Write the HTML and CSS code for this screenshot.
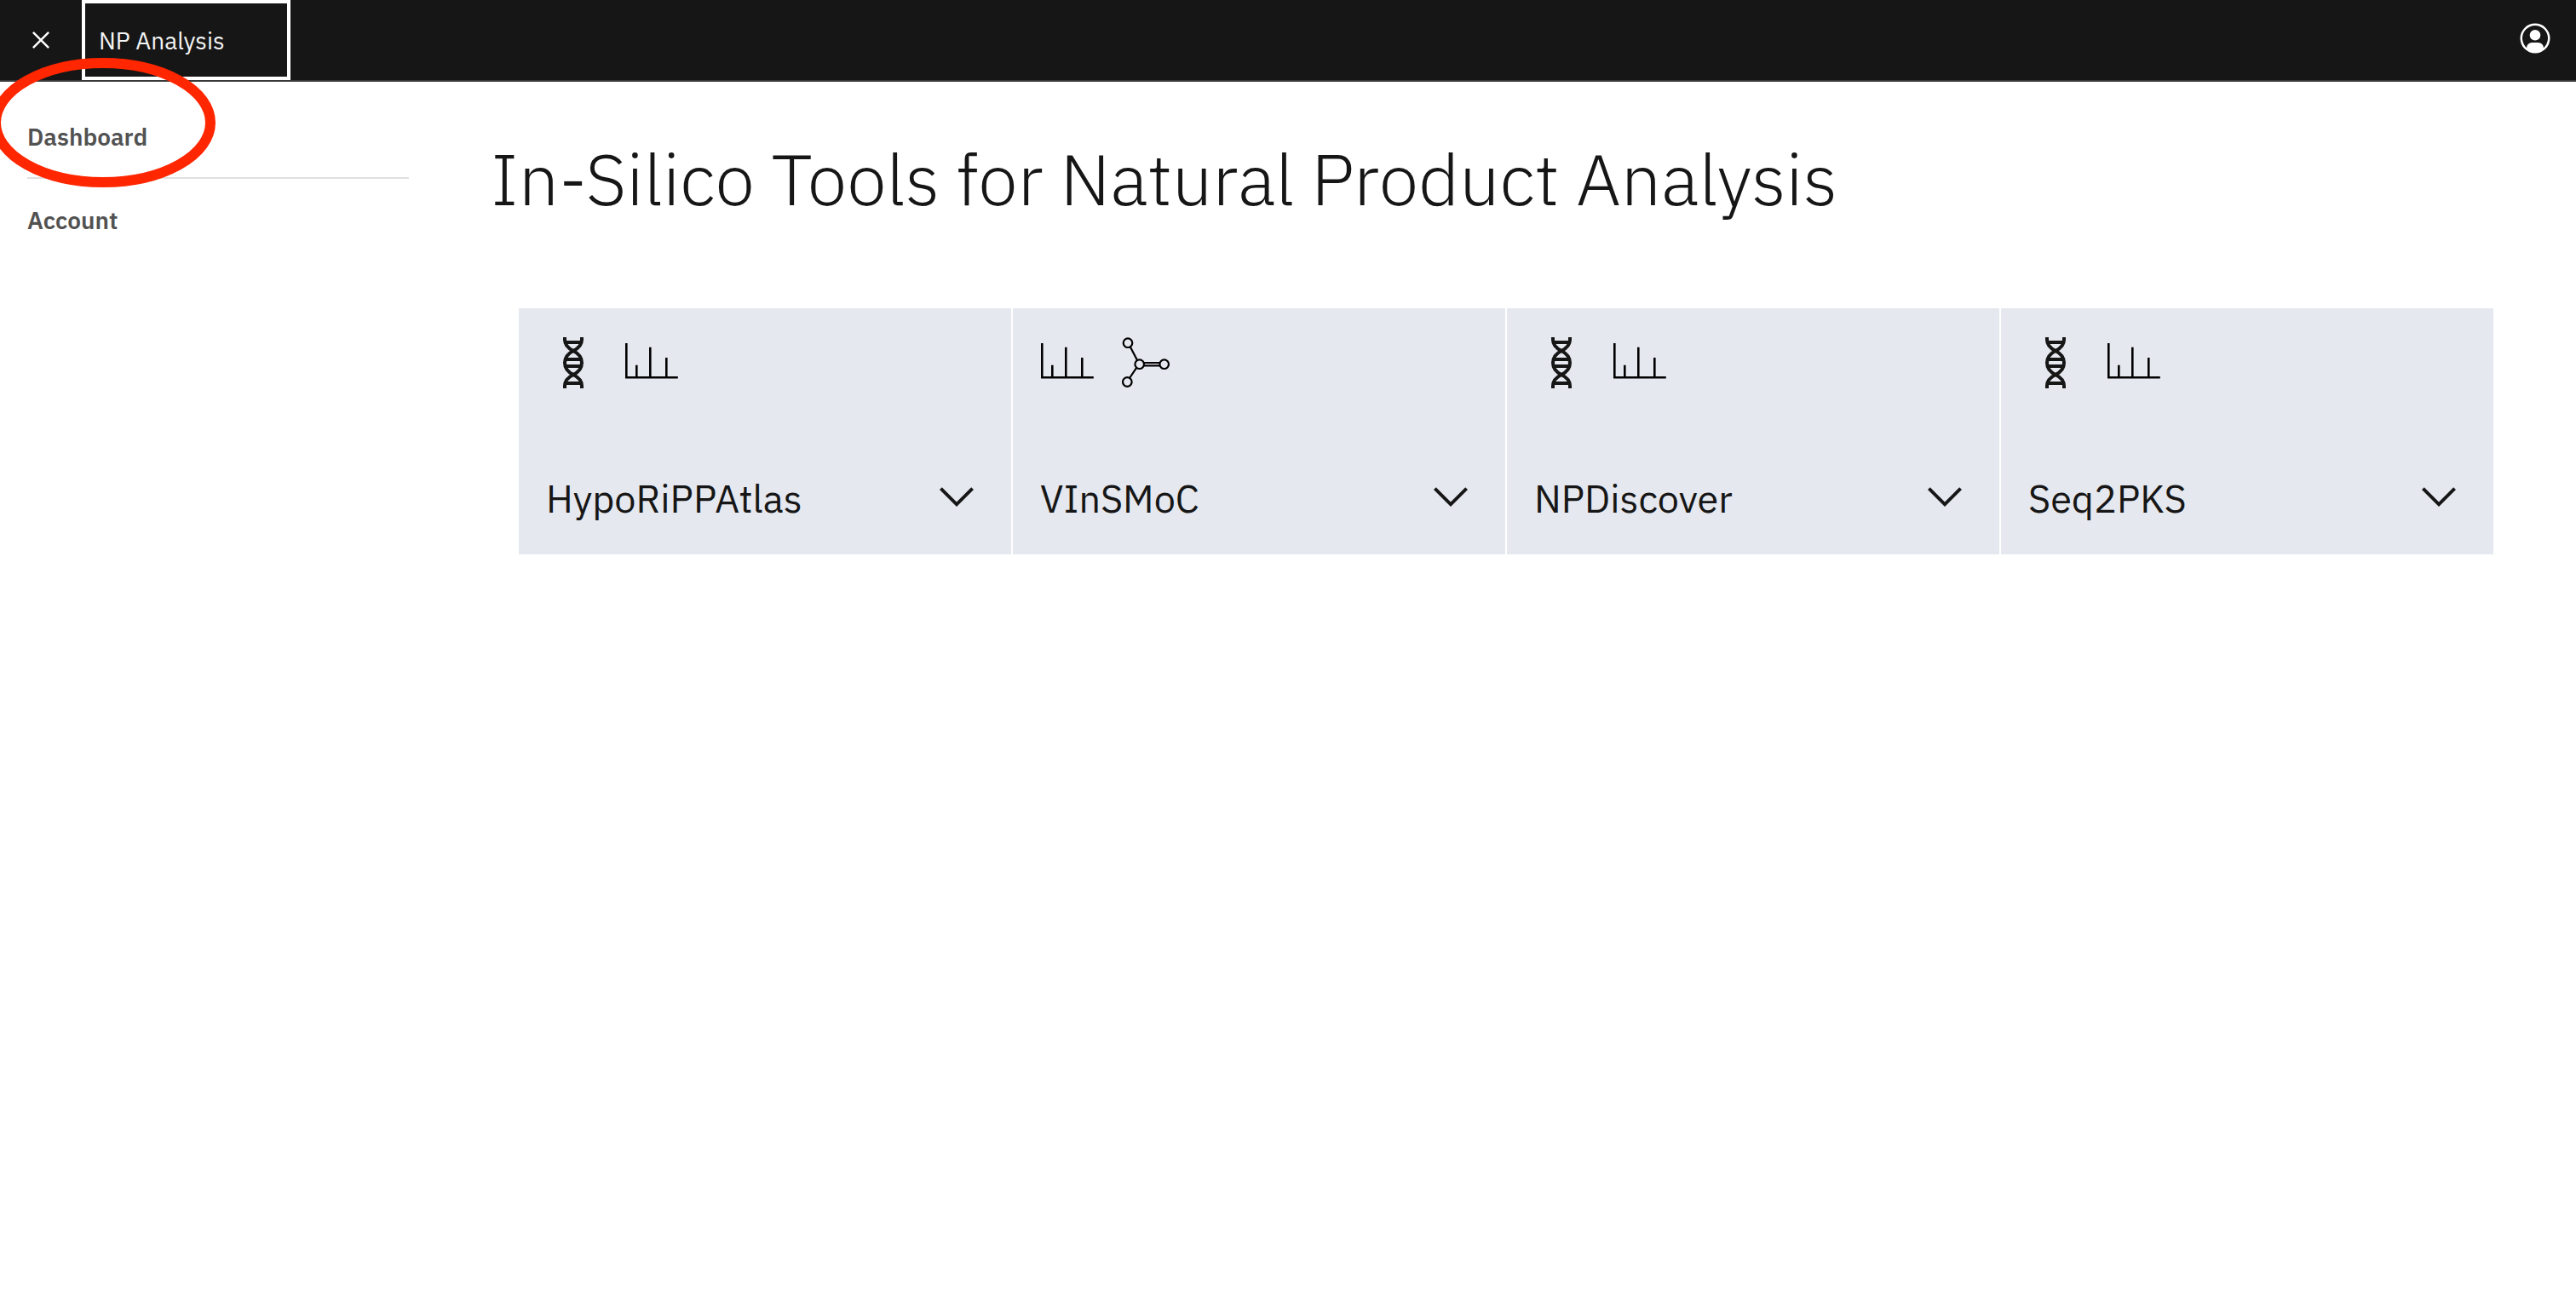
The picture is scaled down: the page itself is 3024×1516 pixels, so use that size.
FILE: index.html
```html
<!DOCTYPE html>
<html lang="en">
<head>
  <meta charset="utf-8">
  <meta name="viewport" content="width=device-width, initial-scale=1">
  <title>NP Analysis</title>
  <link rel="stylesheet" href="styles.css">
</head>
<body>
  <svg class="sprite" aria-hidden="true">
    <symbol id="dna" viewBox="0 0 64 64">
      <g fill="none" stroke="currentColor" stroke-width="4">
        <path d="M22 2v3c0 6 4 10 10 13s10 8 10 14-4 11-10 14-10 7-10 13v3"/>
        <path d="M42 2v3c0 6-4 10-10 13s-10 8-10 14 4 11 10 14 10 7 10 13v3"/>
        <path d="M23 8h18M22 28h20M22 36h20M23 56h18"/>
      </g>
    </symbol>
    <symbol id="spectrum" viewBox="0 0 64 64">
      <path fill="none" stroke="#000" stroke-width="2.6" d="M2.3 9v40.300h60.500M14.300 34.700v15.300M30.300 13.700v36.300M49.300 26v24"/>
    </symbol>
    <symbol id="molecule" viewBox="0 0 64 64">
      <g fill="none" stroke="#000" stroke-width="2.200">
        <circle cx="11" cy="8.700" r="5.300"/>
        <circle cx="24.700" cy="33.700" r="5.300"/>
        <circle cx="53.700" cy="33.700" r="5.300"/>
        <circle cx="10.300" cy="54.500" r="5.300"/>
        <path d="M13.800 13.300L22 29M13 50l8.300-12.300M29.800 32h18.800M29.800 35.400h18.800"/>
      </g>
    </symbol>
    <symbol id="chevron" viewBox="0 0 32 32">
      <path fill="currentColor" d="M16 22L6 12l1.400-1.400 8.600 8.600 8.600-8.600L26 12z"/>
    </symbol>
  </svg>

  <header class="header">
    <button class="menu-button" type="button" aria-label="Close menu">
      <svg class="icon-menu" viewBox="0 0 32 32" aria-hidden="true"><path fill="currentColor" d="M24 9.400L22.600 8 16 14.600 9.400 8 8 9.400l6.600 6.600L8 22.600 9.400 24l6.600-6.600 6.600 6.600 1.400-1.400-6.600-6.600z"/></svg>
    </button>
    <a class="brand" href="#">NP Analysis</a>
    <button class="user-button" type="button" aria-label="User account">
      <svg class="icon-user" viewBox="0 0 32 32" aria-hidden="true"><path fill="currentColor" d="M16 8a5 5 0 1 0 5 5 5 5 0 0 0-5-5z"/><path fill="currentColor" d="M16 2a14 14 0 1 0 14 14A14 14 0 0 0 16 2zm7.992 22.926A5 5 0 0 0 19 20h-6a5 5 0 0 0-4.992 4.926 12 12 0 1 1 15.985 0z"/></svg>
    </button>
  </header>

  <div class="layout">
    <nav class="sidebar" aria-label="Main">
      <a class="nav-link" href="#">Dashboard</a>
      <hr class="nav-divider">
      <a class="nav-link" href="#">Account</a>
      <svg class="highlight" viewBox="0 0 264 154" aria-hidden="true"><ellipse cx="132" cy="77" rx="126" ry="70" fill="none" stroke="#ff2600" stroke-width="12"/></svg>
    </nav>

    <main class="content">
      <h1 class="title">In-Silico Tools for Natural Product Analysis</h1>
      <div class="tools">
        <button class="tool" type="button">
          <span class="tool-icons"><svg class="icon"><use href="#dna"/></svg><svg class="icon"><use href="#spectrum"/></svg></span>
          <span class="tool-row"><span class="tool-name">HypoRiPPAtlas</span><svg class="icon"><use href="#chevron"/></svg></span>
        </button>
        <button class="tool" type="button">
          <span class="tool-icons"><svg class="icon"><use href="#spectrum"/></svg><svg class="icon"><use href="#molecule"/></svg></span>
          <span class="tool-row"><span class="tool-name">VInSMoC</span><svg class="icon"><use href="#chevron"/></svg></span>
        </button>
        <button class="tool" type="button">
          <span class="tool-icons"><svg class="icon"><use href="#dna"/></svg><svg class="icon"><use href="#spectrum"/></svg></span>
          <span class="tool-row"><span class="tool-name">NPDiscover</span><svg class="icon"><use href="#chevron"/></svg></span>
        </button>
        <button class="tool" type="button">
          <span class="tool-icons"><svg class="icon"><use href="#dna"/></svg><svg class="icon"><use href="#spectrum"/></svg></span>
          <span class="tool-row"><span class="tool-name">Seq2PKS</span><svg class="icon"><use href="#chevron"/></svg></span>
        </button>
      </div>
    </main>
  </div>
</body>
</html>
```
FILE: styles.css
```css
* {
  box-sizing: border-box;
}

body {
  margin: 0;
  background: #fff;
  color: #161616;
  font-family: "IBM Plex Sans", "Open Sans", sans-serif;
  font-size: 28px;
}

button {
  padding: 0;
  border: 0;
  background: none;
  color: inherit;
  font: inherit;
  text-align: left;
  cursor: pointer;
}

a {
  color: inherit;
  text-decoration: none;
}

.sprite {
  display: none;
}

/* Header */
.header {
  display: flex;
  height: 96px;
  border-bottom: 2px solid #393939;
  background: #161616;
  color: #fff;
}

.menu-button,
.user-button {
  display: flex;
  align-items: center;
  justify-content: center;
  width: 96px;
}

.user-button {
  margin-left: auto;
  padding-bottom: 4px;
}

.icon-menu,
.icon-user {
  width: 40px;
  height: 40px;
}

.brand {
  display: flex;
  align-items: center;
  width: 245px;
  padding: 0 16px;
  border: 4px solid #fff;
  color: #f4f4f4;
}

/* Page body */
.layout {
  display: flex;
}

.sidebar {
  position: relative;
  flex: none;
  width: 512px;
  padding: 32px 32px 0;
}

.nav-link {
  display: flex;
  align-items: center;
  height: 64px;
  color: #525252;
  font-weight: 600;
}

.nav-divider {
  height: 2px;
  margin: 16px 0;
  border: 0;
  background: #e0e0e0;
}

/* Ring drawn over the header and the first link */
.highlight {
  position: absolute;
  top: -29px;
  left: -11px;
  width: 264px;
  height: 154px;
  pointer-events: none;
}

.content {
  flex: 1;
  padding: 64px 64px 64px;
}

.title {
  margin: 0;
  font-size: 84px;
  font-weight: 300;
  line-height: 100px;
}

.tools {
  display: grid;
  grid-template-columns: repeat(4, 1fr);
  gap: 2px;
  margin: 102px 33px 0;
}

.tool {
  display: flex;
  flex-direction: column;
  justify-content: space-between;
  height: 289px;
  padding: 32px 32px 36px;
  background: #e5e8ef;
}

.icon {
  display: block;
  flex: none;
  width: 64px;
  height: 64px;
}

.tool-icons {
  display: flex;
  gap: 28px;
}

.tool-row {
  display: flex;
  align-items: center;
  justify-content: space-between;
  width: 100%;
}

.tool-name {
  padding-top: 4px;
  font-size: 45px;
  line-height: 60px;
}
```
